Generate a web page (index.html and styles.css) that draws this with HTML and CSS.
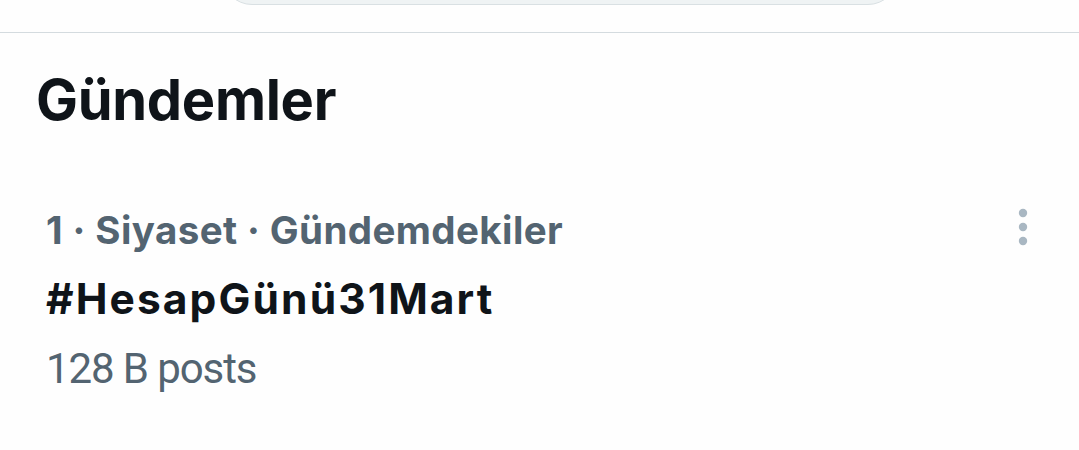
FILE: index.html
```html
<!DOCTYPE html>
<html lang="tr">
<head>
    <meta charset="UTF-8">
    <meta name="viewport" content="width=device-width, initial-scale=1.0">
    <title>Gündemler</title>
    <link rel="stylesheet" href="styles.css">
</head>
<body>
    <div class="top-bar">
        <div class="search-pill"></div>
    </div>

    <div class="section">
        <h2 class="section-title">Gündemler</h2>

        <div class="trend">
            <div class="trend-text">
                <div class="trend-meta">1 · Siyaset · Gündemdekiler</div>
                <div class="trend-name">#HesapGünü31Mart</div>
                <div class="trend-count">128 B posts</div>
            </div>
            <button class="more-btn" aria-label="Daha fazla">
                <svg width="12" height="38" viewBox="0 0 12 38">
                    <circle cx="6" cy="5" r="4.2" fill="#a9b7c2"/>
                    <circle cx="6" cy="19" r="4.2" fill="#a9b7c2"/>
                    <circle cx="6" cy="33" r="4.2" fill="#a9b7c2"/>
                </svg>
            </button>
        </div>
    </div>
</body>
</html>
```

FILE: styles.css
```css
* {
    margin: 0;
    padding: 0;
    box-sizing: border-box;
}

body {
    font-family: Inter, Roboto, "Liberation Sans", sans-serif;
    background: #fefefe;
    color: #0f1419;
    width: 1079px;
    height: 450px;
    overflow: hidden;
}

.top-bar {
    height: 33px;
    border-bottom: 1px solid #d4dbdf;
    display: flex;
    justify-content: center;
    align-items: flex-end;
    padding-bottom: 27px;
    overflow: hidden;
}

.search-pill {
    flex: none;
    width: 676px;
    height: 60px;
    margin-left: 41px;
    background: #eff3f4;
    border: 1px solid #d9e0e3;
    border-radius: 30px;
}

.section-title {
    font-size: 56px;
    line-height: 70px;
    font-weight: 700;
    letter-spacing: -0.3px;
    color: #0f1419;
    margin-top: 32px;
    padding-left: 36px;
}

.trend {
    display: flex;
    justify-content: space-between;
    align-items: flex-start;
    margin-top: 71px;
    padding-left: 46px;
    padding-right: 50px;
}

.trend-meta {
    font-size: 38.5px;
    line-height: 48px;
    font-weight: 700;
    letter-spacing: 0.4px;
    color: #536471;
}

.trend-name {
    font-size: 42.5px;
    line-height: 50px;
    font-weight: 700;
    letter-spacing: 2.1px;
    color: #0f1419;
    margin-top: 20px;
}

.trend-count {
    font-family: Roboto, "Liberation Sans", sans-serif;
    font-size: 42px;
    line-height: 50px;
    font-weight: 400;
    letter-spacing: -1.1px;
    color: #536471;
    margin-top: 20px;
}

.more-btn {
    background: none;
    border: none;
    margin-top: 2px;
    display: flex;
}
```
